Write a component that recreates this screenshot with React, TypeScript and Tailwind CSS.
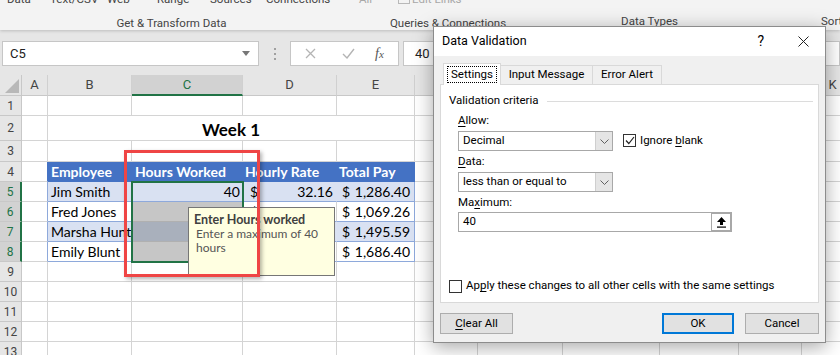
import React from 'react';

type Cell = { w: string; content?: React.ReactNode; bg?: string; r?: string; b?: string; cls?: string };

const W = ['w-[26px]', 'w-[84px]', 'w-[111px]', 'w-[94px]', 'w-[78px]', 'w-[63px]', 'w-[85px]', 'w-[97px]', 'w-[79px]', 'w-[63px]', 'w-[62px]'];
const LETTERS = ['A', 'B', 'C', 'D', 'E', 'F', 'G', 'H', 'I', 'J', 'K'];

const grid = (over: Record<number, Partial<Cell>> = {}): Cell[] => W.map((w, i) => ({ w, ...over[i] }));

const Money = ({ v, pl = 'pl-[5px]', pr = 'pr-[4px]' }: { v: string; pl?: string; pr?: string }) => (
  <div className={`flex w-full justify-between ${pl} ${pr}`}>
    <span>$</span>
    <span>{v}</span>
  </div>
);

function Row({ n, h, cells, sel }: { n: number; h: string; cells: Cell[]; sel?: boolean }) {
  return (
    <div className={`flex ${h}`}>
      <div
        className={`w-[22px] shrink-0 flex items-center justify-center border-b border-b-[#c8c8c8] text-[12px] ${
          sel ? 'bg-[#d2d2d2] text-[#217346] border-r-2 border-r-[#217346]' : 'bg-[#e6e6e6] text-[#444] border-r border-r-[#c8c8c8]'
        }`}
      >
        {n}
      </div>
      {cells.map((c, i) => (
        <div
          key={i}
          className={`${c.w} shrink-0 flex items-center overflow-hidden whitespace-nowrap border-r border-b font-['Lato',sans-serif] text-[14px] text-black ${c.bg ?? ''} ${
            c.r ?? 'border-r-[#d4d4d4]'
          } ${c.b ?? 'border-b-[#d4d4d4]'} ${c.cls ?? ''}`}
        >
          {c.content}
        </div>
      ))}
    </div>
  );
}

const people = [
  { name: 'Jim Smith', rate: '32.16', pay: '1,286.40' },
  { name: 'Fred Jones', rate: '26.73', pay: '1,069.26' },
  { name: 'Marsha Hunt', rate: '37.39', pay: '1,495.59' },
  { name: 'Emily Blunt', rate: '42.16', pay: '1,686.40' },
];
const selFill = ['bg-[#d9e1f2]', 'bg-[#c6c6c6]', 'bg-[#a9b0bc]', 'bg-[#c6c6c6]'];

function Ribbon() {
  return (
    <div className="relative z-10 h-[30px] bg-[#f3f3f3] shadow-[0_1px_3px_rgba(0,0,0,0.18)] flex text-[11.5px] text-[#444] overflow-hidden">
      <div className="w-[343px] shrink-0 flex flex-col">
        <div className="flex h-[16px] -mt-[9px]">
          <span className="w-[50px] pl-[7px]">Data</span>
          <span className="w-[57px]">Text/CSV</span>
          <span className="w-[50px]">Web</span>
          <span className="w-[53px]">Range</span>
          <span className="w-[56px]">Sources</span>
          <span>Connections</span>
        </div>
        <div className="mt-[8px] text-center">Get &amp; Transform Data</div>
      </div>
      <div className="w-px h-[25px] bg-[#c8c8c8]" />
      <div className="w-[210px] shrink-0 flex flex-col">
        <div className="flex h-[16px] -mt-[9px] text-[#a8a8a8]">
          <span className="ml-[16px]">All</span>
          <span className="ml-[26px] w-[12px] h-[10px] mt-[3px] border border-[#b8b8b8]" />
          <span className="ml-[2px]">Edit Links</span>
        </div>
        <div className="mt-[8px] text-center">Queries &amp; Connections</div>
      </div>
      <div className="w-px h-[25px] bg-[#c8c8c8]" />
      <div className="w-[193px] shrink-0 flex flex-col">
        <div className="h-[16px] -mt-[9px]" />
        <div className="mt-[8px] text-center">Data Types</div>
      </div>
      <div className="w-px h-[25px] bg-[#c8c8c8]" />
      <div className="flex-1 flex flex-col">
        <div className="h-[16px] -mt-[9px]" />
        <div className="mt-[8px] pl-[75px]">Sort</div>
      </div>
    </div>
  );
}

function FormulaBar() {
  return (
    <div className="h-[45px] bg-[#e6e6e6] flex items-start pt-[11px] pl-[2px]">
      <div className="w-[257px] h-[25px] bg-white border border-[#c6c6c6] flex items-center pl-[7px] pr-[8px] text-[13px] text-[#222]">
        <span>C5</span>
        <svg className="ml-auto" width="8" height="5" viewBox="0 0 8 5">
          <polygon points="0,0 8,0 4,5" fill="#777" />
        </svg>
      </div>
      <div className="ml-[15px] mt-[7px] flex flex-col gap-[3px]">
        <span className="w-[2px] h-[2px] bg-[#a0a0a0]" />
        <span className="w-[2px] h-[2px] bg-[#a0a0a0]" />
        <span className="w-[2px] h-[2px] bg-[#a0a0a0]" />
      </div>
      <div className="ml-[14px] w-[109px] h-[25px] bg-white border border-[#c6c6c6] flex items-center">
        <svg className="ml-[14px]" width="11" height="11" viewBox="0 0 11 11">
          <path d="M1 1 L10 10 M10 1 L1 10" stroke="#b4b4b4" strokeWidth="1.3" />
        </svg>
        <svg className="ml-[26px]" width="13" height="11" viewBox="0 0 13 11">
          <path d="M1 6 L5 10 L12 1" stroke="#b4b4b4" strokeWidth="1.4" fill="none" />
        </svg>
        <span className="ml-[20px] font-['Liberation_Serif',serif] italic text-[14px] text-[#555]">
          f<span className="text-[11px]">x</span>
        </span>
      </div>
      <div className="ml-[4px] flex-1 h-[25px] bg-white border border-[#c6c6c6] flex items-center pl-[11px] text-[13px] text-[#222]">
        40
      </div>
    </div>
  );
}

function Sheet() {
  const rows: { n: number; h: string; cells: Cell[]; sel?: boolean }[] = [];
  rows.push({ n: 1, h: 'h-[20px]', cells: grid() });
  rows.push({
    n: 2,
    h: 'h-[25px]',
    cells: [
      { w: W[0] },
      {
        w: 'w-[367px]',
        cls: 'justify-center items-end pb-[2px]',
        content: <span className="font-bold text-[17px] leading-none">Week 1</span>,
      },
      ...W.slice(5).map((w) => ({ w })),
    ],
  });
  rows.push({ n: 3, h: 'h-[21px]', cells: grid() });
  const hd = { bg: 'bg-[#4472c4]', r: 'border-r-[#4472c4]', b: 'border-b-[#4472c4]', cls: 'text-white font-bold' };
  rows.push({
    n: 4,
    h: 'h-[20px]',
    cells: grid({
      0: { r: 'border-r-[#4472c4]' },
      1: { ...hd, cls: hd.cls + ' pl-[3px]', content: 'Employee' },
      2: { ...hd, cls: hd.cls + ' pl-[3px]', content: 'Hours Worked' },
      3: { ...hd, cls: hd.cls + ' pl-[2px]', content: 'Hourly Rate' },
      4: { ...hd, cls: hd.cls + ' pl-[2px]', content: 'Total Pay' },
    }),
  });
  people.forEach((p, i) => {
    const band = i % 2 === 0;
    const bg = band ? 'bg-[#d9e1f2]' : '';
    const r = band ? 'border-r-[#d9e1f2]' : 'border-r-[#d4d4d4]';
    const b = 'border-b-[#8ea9db]';
    rows.push({
      n: 5 + i,
      h: 'h-[20px]',
      sel: true,
      cells: grid({
        0: { r: 'border-r-[#8ea9db]' },
        1: { bg, r, b, cls: 'pl-[3px]', content: p.name },
        2: {
          bg: selFill[i],
          r: 'border-r-[#d4d4d4]',
          b: i === 0 ? 'border-b-[#8ea9db]' : 'border-b-[#b0b0b0]',
          cls: 'justify-end pr-[2px]',
          content: i === 0 ? '40' : null,
        },
        3: { bg, r, b, content: <Money v={p.rate} pl="pl-[7px]" pr="pr-[3px]" /> },
        4: { bg, r: 'border-r-[#8ea9db]', b, content: <Money v={p.pay} /> },
      }),
    });
  });
  for (let n = 9; n <= 13; n++) rows.push({ n, h: 'h-[20px]', cells: grid() });

  return (
    <div className="flex flex-col">
      <div className="flex h-[21px] text-[13px] text-[#444]">
        <div className="w-[22px] shrink-0 bg-[#e6e6e6] border-r border-b border-[#c8c8c8] relative">
          <svg className="absolute right-[2px] bottom-[2px]" width="14" height="14" viewBox="0 0 14 14">
            <polygon points="14,0 14,14 0,14" fill="#b8b8b8" />
          </svg>
        </div>
        {W.map((w, i) => (
          <div
            key={i}
            className={`${w} shrink-0 flex items-center justify-center border-r border-r-[#d0d0d0] ${
              i === 2 ? 'bg-[#d2d2d2] text-[#217346] border-b-2 border-b-[#217346]' : 'bg-[#e6e6e6] border-b border-b-[#c8c8c8]'
            }`}
          >
            {LETTERS[i]}
          </div>
        ))}
      </div>
      {rows.map((r) => (
        <Row key={r.n} {...r} />
      ))}
    </div>
  );
}

function Underline({ children }: { children: React.ReactNode }) {
  return <span className="underline underline-offset-2">{children}</span>;
}

function Chevron() {
  return (
    <div className="w-[17px] h-full bg-[#e5e5e5] border-l border-[#cfcfcf] flex items-center justify-center">
      <svg width="9" height="5" viewBox="0 0 9 5">
        <path d="M0.5 0.5 L4.5 4.5 L8.5 0.5" stroke="#606060" strokeWidth="1" fill="none" />
      </svg>
    </div>
  );
}

function Dialog() {
  return (
    <div className="absolute left-[433px] top-[26px] w-[393px] h-[317px] bg-[#f0f0f0] border border-[#8c8c8c] shadow-[0_4px_18px_rgba(0,0,0,0.35)] flex flex-col text-[11.5px] text-black z-30">
      <div className="h-[29px] shrink-0 bg-white flex items-center pl-[8px]">
        <span className="text-[12.5px]">Data Validation</span>
        <span className="ml-auto text-[14px] mr-[34px]">?</span>
        <svg className="mr-[16px]" width="11" height="11" viewBox="0 0 11 11">
          <path d="M0.5 0.5 L10.5 10.5 M10.5 0.5 L0.5 10.5" stroke="#222" strokeWidth="1" />
        </svg>
      </div>
      <div className="flex-1 px-[6px] pt-[7px] flex flex-col">
        <div className="relative z-10 -mb-px flex items-start h-[22px] pl-[3px]">
          <div className="h-[22px] w-[58px] bg-white border border-b-0 border-[#d9d9d9] flex items-center justify-center">
            <span className="border border-dotted border-black px-[3px] leading-[15px]">Settings</span>
          </div>
          <div className="mt-[2px] h-[19px] w-[92px] border border-b-0 border-l-0 border-[#d9d9d9] flex items-center justify-center">
            Input Message
          </div>
          <div className="mt-[2px] h-[19px] w-[69px] border border-b-0 border-l-0 border-[#d9d9d9] flex items-center justify-center">
            Error Alert
          </div>
        </div>
        <div className="h-[219px] bg-white border border-[#d9d9d9] flex flex-col pt-[8px] pl-[8px] pr-[5px] pb-[8px]">
          <div className="h-[16px] flex items-center">
            <span>Validation criteria</span>
            <div className="flex-1 ml-[8px] h-px bg-[#dcdcdc]" />
          </div>
          <div className="pl-[9px] flex flex-col">
            <div className="mt-[4px] h-[16px] flex items-center">
              <span>
                <Underline>A</Underline>llow:
              </span>
            </div>
            <div className="mt-[2px] flex items-start">
              <div className="w-[155px] h-[20px] border border-[#a8a8a8] flex items-center">
                <span className="pl-[4px] flex-1">Decimal</span>
                <Chevron />
              </div>
              <div className="ml-[10px] mt-px flex items-center">
                <div className="w-[13px] h-[13px] border border-[#333] bg-white flex items-center justify-center">
                  <svg width="10" height="9" viewBox="0 0 10 9">
                    <path d="M1 4.5 L3.8 7.5 L9 1" stroke="#222" strokeWidth="1.2" fill="none" />
                  </svg>
                </div>
                <span className="ml-[4px]">
                  Ignore <Underline>b</Underline>lank
                </span>
              </div>
            </div>
            <div className="mt-[3px] h-[16px] flex items-center">
              <span>
                <Underline>D</Underline>ata:
              </span>
            </div>
            <div className="mt-[2px] w-[155px] h-[20px] border border-[#a8a8a8] flex items-center">
              <span className="pl-[4px] flex-1">less than or equal to</span>
              <Chevron />
            </div>
            <div className="mt-[3px] h-[16px] flex items-center">
              <span>
                Ma<Underline>x</Underline>imum:
              </span>
            </div>
            <div className="mt-px w-[274px] h-[20px] border border-[#a8a8a8] flex items-center">
              <span className="pl-[4px] flex-1">40</span>
              <div className="w-[20px] h-[18px] border border-[#a8a8a8] bg-white flex items-center justify-center">
                <svg width="11" height="12" viewBox="0 0 11 12">
                  <path d="M5.5 1 L10 6 L7 6 L7 9 L4 9 L4 6 L1 6 Z" fill="#000" />
                  <rect x="1" y="10.5" width="9" height="1.2" fill="#000" />
                </svg>
              </div>
            </div>
          </div>
          <div className="mt-auto h-[16px] flex items-center">
            <div className="w-[13px] h-[13px] border border-[#333] bg-white" />
            <span className="ml-[4px]">
              Ap<Underline>p</Underline>ly these changes to all other cells with the same settings
            </span>
          </div>
        </div>
        <div className="mt-[10px] flex items-start">
          <div className="w-[73px] h-[21px] bg-[#e1e1e1] border border-[#adadad] flex items-center justify-center">
            <span>
              <Underline>C</Underline>lear All
            </span>
          </div>
          <div className="ml-[149px] w-[72px] h-[21px] bg-[#e1e1e1] border-2 border-[#0078d7] flex items-center justify-center">
            OK
          </div>
          <div className="ml-[11px] w-[74px] h-[21px] bg-[#e1e1e1] border border-[#adadad] flex items-center justify-center">
            Cancel
          </div>
        </div>
      </div>
    </div>
  );
}

export default function App() {
  return (
    <div className="relative w-[840px] h-[355px] overflow-hidden bg-white font-['Roboto',sans-serif]">
      <Ribbon />
      <FormulaBar />
      <Sheet />
      {/* selection outline C5:C8 */}
      <div className="absolute left-[131px] top-[181px] w-[113px] h-[82px] border-2 border-[#217346] z-10" />
      {/* input message tooltip */}
      <div className="absolute left-[188px] top-[207px] w-[147px] h-[69px] bg-[#ffffe1] border border-[#767676] z-20 pl-[5px] pt-[5px] font-['Lato',sans-serif] leading-[14px]">
        <div className="font-bold text-[12.5px] text-[#404040]">Enter Hours worked</div>
        <div className="pl-[2px] text-[12px] text-[#555]">
          Enter a maximum of 40
          <br />
          hours
        </div>
      </div>
      {/* red highlight */}
      <div className="absolute left-[124px] top-[150px] w-[136px] h-[127px] border-[3px] border-[#ef4545] shadow-[2px_2px_4px_rgba(0,0,0,0.3)] z-20" />
      <Dialog />
    </div>
  );
}
